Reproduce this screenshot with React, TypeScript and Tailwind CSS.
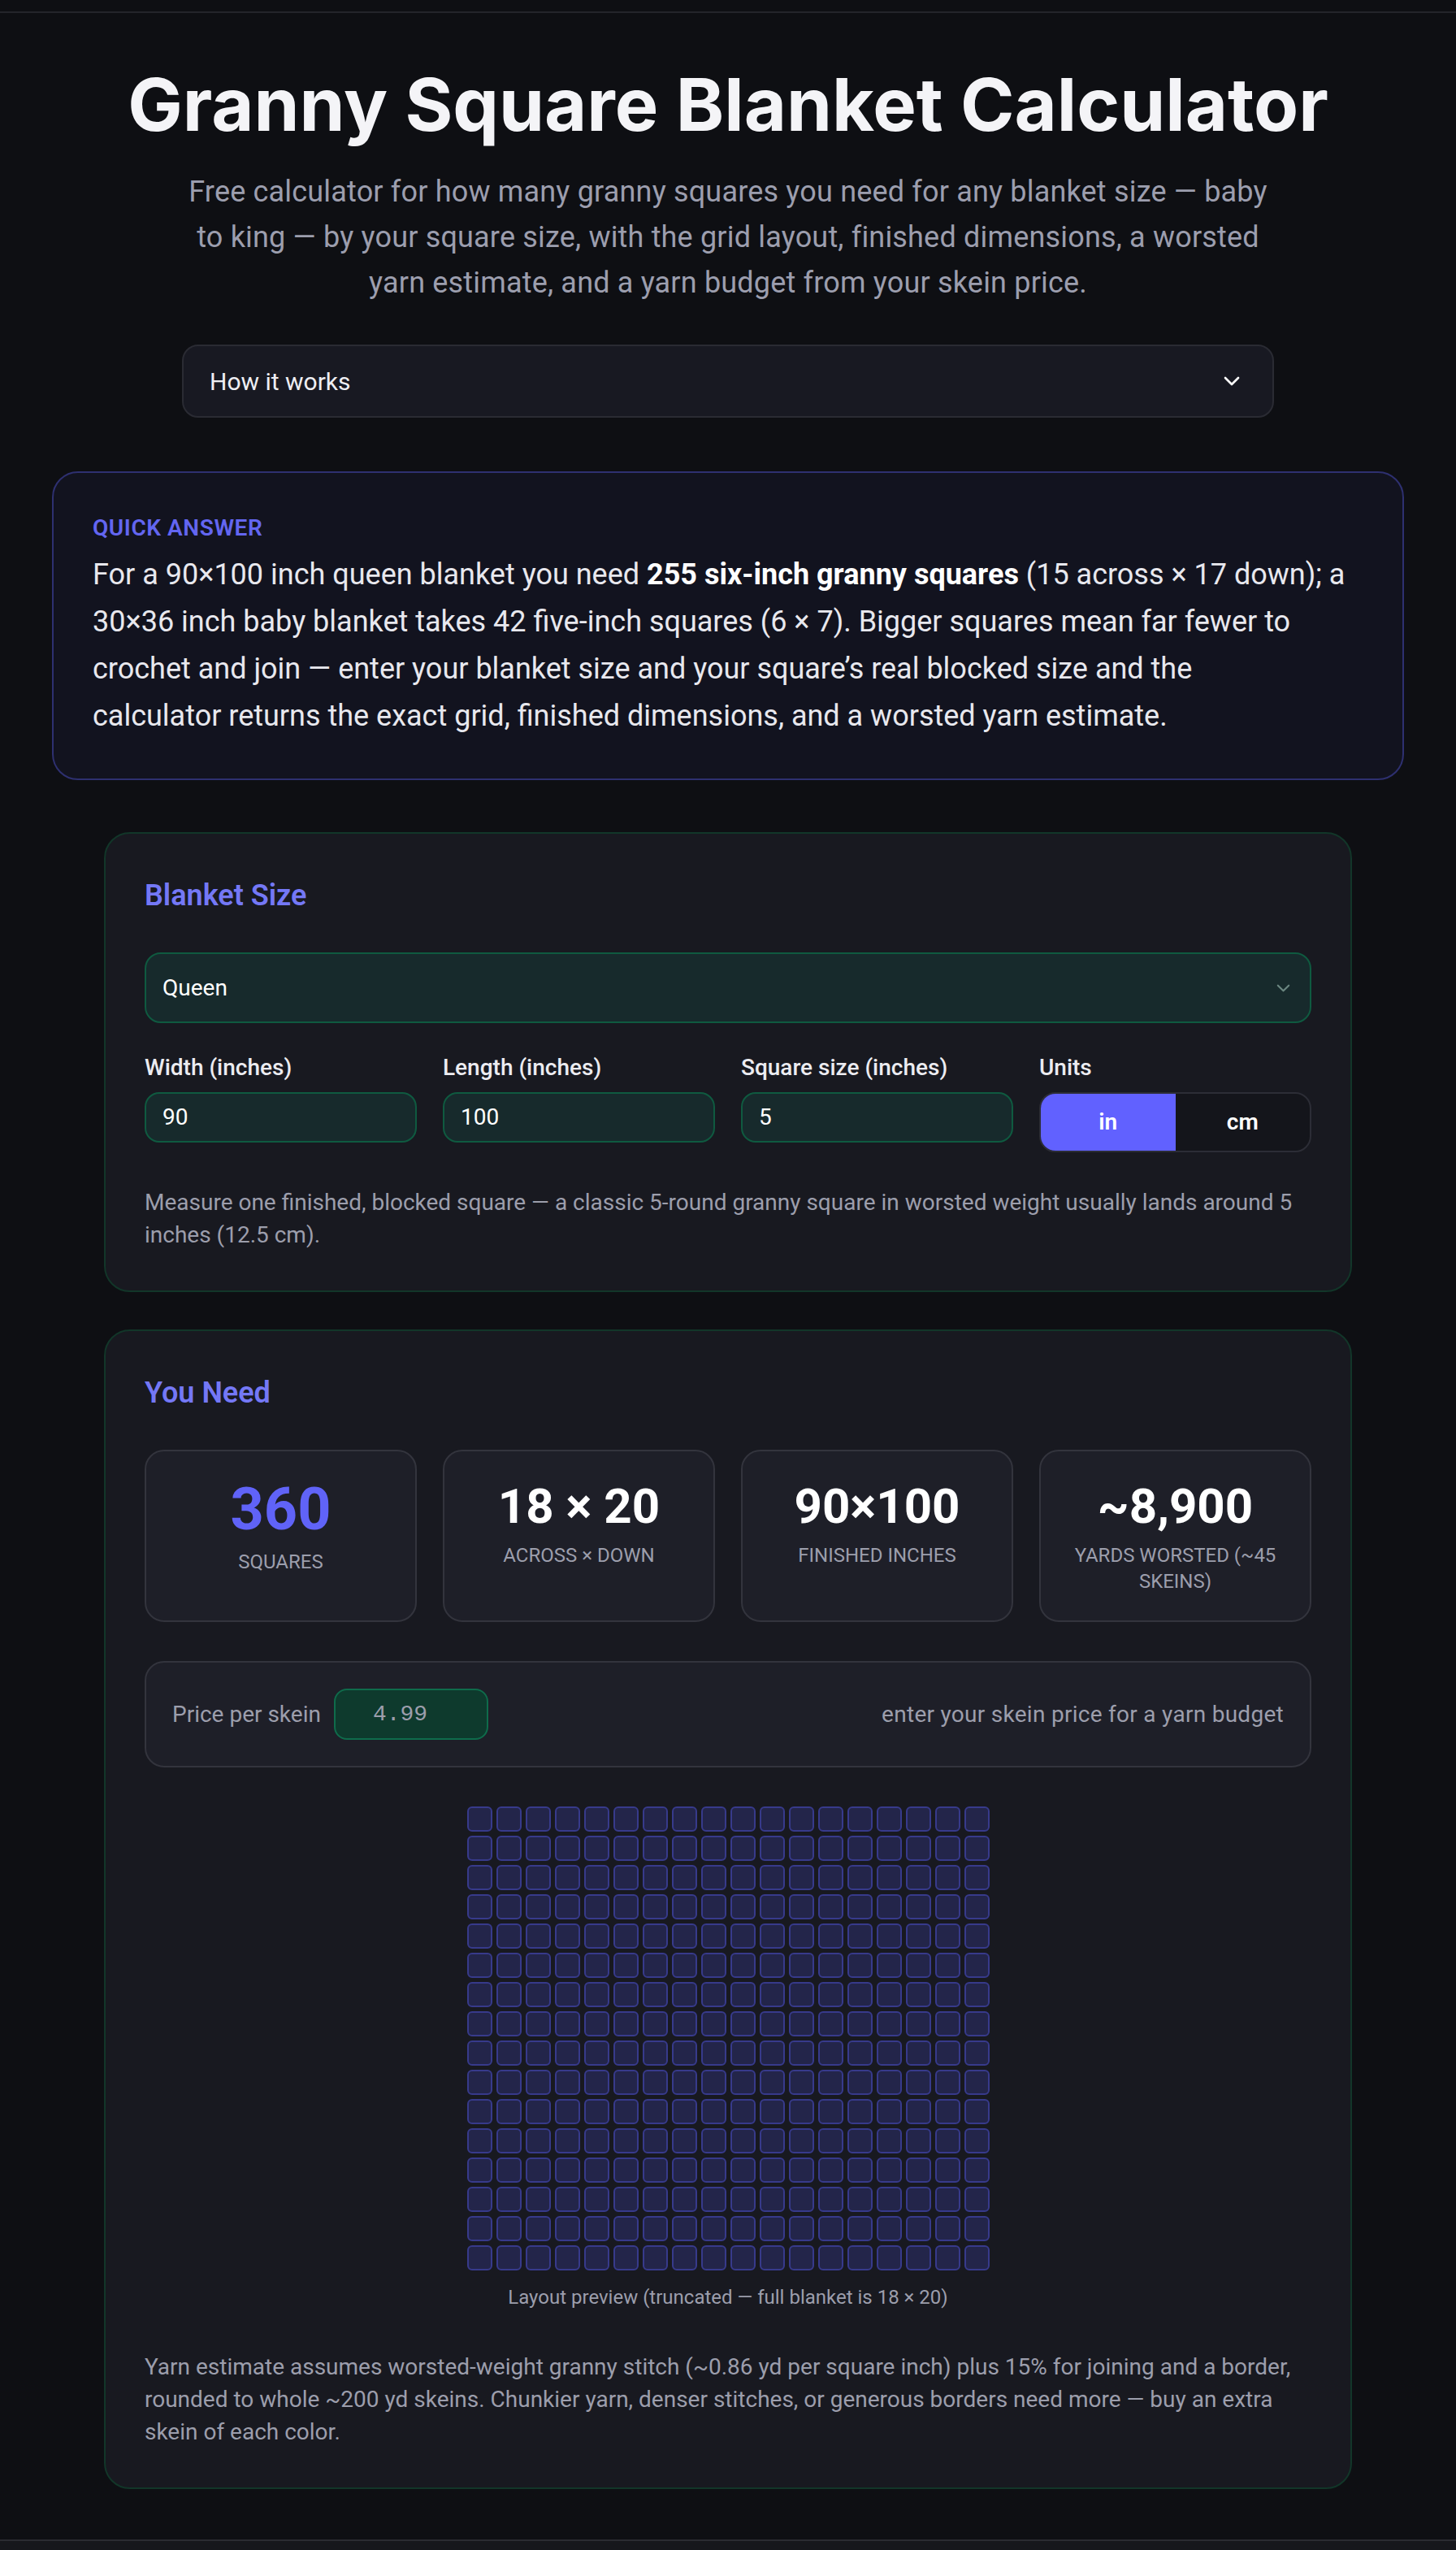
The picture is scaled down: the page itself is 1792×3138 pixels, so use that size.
import React from "react";

const stats = [
  { value: "360", label: "Squares", primary: true },
  { value: "18 × 20", label: "Across × Down", primary: false },
  { value: "90×100", label: "Finished inches", primary: false },
  { value: "~8,900", label: "Yards worsted (~45 skeins)", primary: false },
];

const fields = [
  { label: "Width (inches)", value: "90" },
  { label: "Length (inches)", value: "100" },
  { label: "Square size (inches)", value: "5" },
];

function Chevron({ className }: { className?: string }) {
  return (
    <svg viewBox="0 0 20 12" fill="none" className={className}>
      <path d="M2 2l8 8 8-8" stroke="currentColor" strokeWidth="2.6" strokeLinecap="round" strokeLinejoin="round" />
    </svg>
  );
}

export default function App() {
  const cells = Array.from({ length: 18 * 16 }, (_, i) => i);
  return (
    <div className="min-h-screen bg-[#0e0f13] font-['Roboto',sans-serif] text-white">
      <div className="h-[16px] border-b-2 border-[#24252b]" />
      <main className="px-[64px] pt-[65px]">
        <h1 className="text-center font-['Inter',sans-serif] text-[90px] font-bold leading-[96px] text-[#f4f4f7]">
          Granny Square Blanket Calculator
        </h1>
        <p className="mx-auto mt-[31px] max-w-[1344px] text-center text-[36px] leading-[56px] tracking-[0.005em] text-[#9c9eae]">
          Free calculator for how many granny squares you need for any blanket size — baby to king — by your square size, with the grid layout, finished dimensions, a worsted yarn estimate, and a yarn budget from your skein price.
        </p>
        <div className="mx-auto mt-[48px] flex h-[90px] max-w-[1344px] items-center justify-between rounded-[20px] border-2 border-[#2a2b33] bg-[#181922] pl-[32px] pr-[40px]">
          <span className="text-[30px] text-[#eeeef3]">How it works</span>
          <Chevron className="h-[12px] w-[20px] text-white" />
        </div>

        <section className="mt-[66px] rounded-[32px] border-2 border-[#2e3070] bg-[#12131f] p-[48px]">
          <div className="text-[28px] font-semibold uppercase leading-[40px] tracking-[0.02em] text-[#6366f1]">Quick answer</div>
          <p className="mt-[8px] text-[36px] leading-[58px] text-[#e8e8ee]">
            For a 90×100 inch queen blanket you need <strong className="font-bold text-white">255 six-inch granny squares</strong> (15 across × 17 down); a 30×36 inch baby blanket takes 42 five-inch squares (6 × 7). Bigger squares mean far fewer to crochet and join — enter your blanket size and your square’s real blocked size and the
            <br />
            calculator returns the exact grid, finished dimensions, and a worsted yarn estimate.
          </p>
        </section>

        <section className="mx-auto mt-[64px] max-w-[1536px] rounded-[32px] border-2 border-[#123629] bg-[#181920] p-[48px]">
          <h2 className="text-[36px] font-semibold leading-[56px] text-[#7478f6]">Blanket Size</h2>
          <div className="mt-[42px] flex h-[87px] items-center justify-between rounded-[20px] border-2 border-[#0f5a40] bg-[#172a2c] pl-[20px] pr-[24px]">
            <span className="text-[28px] text-white">Queen</span>
            <Chevron className="h-[10px] w-[17px] text-[#6a8680]" />
          </div>
          <div className="mt-[35px] grid grid-cols-4 items-start gap-x-[32px]">
            {fields.map((f) => (
              <div key={f.label}>
                <div className="text-[28px] font-medium leading-[40px] text-[#ececf1]">{f.label}</div>
                <div className="mt-[10px] flex h-[62px] items-center rounded-[18px] border-2 border-[#0f5a40] bg-[#172a2c] px-[20px] text-[28px] text-white">
                  {f.value}
                </div>
              </div>
            ))}
            <div>
              <div className="text-[28px] font-medium leading-[40px] text-[#ececf1]">Units</div>
              <div className="mt-[10px] flex h-[74px] overflow-hidden rounded-[20px] border-2 border-[#2c2d36] bg-[#14151b]">
                <div className="flex flex-1 items-center justify-center bg-[#6161ff] text-[28px] font-semibold text-white">in</div>
                <div className="flex flex-1 items-center justify-center text-[28px] font-semibold text-white">cm</div>
              </div>
            </div>
          </div>
          <p className="mt-[42px] text-[28px] leading-[40px] text-[#9c9eac]">
            Measure one finished, blocked square — a classic 5-round granny square in worsted weight usually lands around 5 inches (12.5 cm).
          </p>
        </section>

        <section className="mx-auto mt-[46px] max-w-[1536px] rounded-[32px] border-2 border-[#123629] bg-[#181920] p-[48px]">
          <h2 className="text-[36px] font-semibold leading-[56px] text-[#7478f6]">You Need</h2>
          <div className="mt-[42px] grid grid-cols-4 gap-[32px]">
            {stats.map((s) => (
              <div key={s.label} className="rounded-[24px] border-2 border-[#33343d] bg-[#1e1f28] px-[32px] py-[32px] text-center">
                {s.primary ? (
                  <div className="text-[72px] font-bold leading-[80px] text-[#6063f8]">{s.value}</div>
                ) : (
                  <div className="text-[60px] font-bold leading-[72px] text-white">{s.value}</div>
                )}
                <div className="mt-[8px] text-[24px] uppercase leading-[32px] text-[#9c9eac]">{s.label}</div>
              </div>
            ))}
          </div>

          <div className="mt-[48px] flex items-center justify-between rounded-[24px] border-2 border-[#33343d] bg-[#1e1f28] px-[32px] py-[32px]">
            <div className="flex items-center gap-[16px]">
              <span className="text-[28px] text-[#9c9eac]">Price per skein</span>
              <div className="flex h-[63px] w-[190px] items-center rounded-[16px] border-2 border-[#0f6b4b] bg-[#0e3a2d] pl-[46px] font-['Liberation_Mono',monospace] text-[28px] text-[#9c9eac]">
                4.99
              </div>
            </div>
            <span className="text-[28px] tracking-[0.01em] text-[#9c9eac]">enter your skein price for a yarn budget</span>
          </div>

          <div className="mt-[48px] flex justify-center">
            <div className="grid grid-cols-[repeat(18,31px)] gap-[5px]">
              {cells.map((i) => (
                <div key={i} className="h-[31px] w-[31px] rounded-[6px] border-2 border-[#373a8b] bg-[#23254a]" />
              ))}
            </div>
          </div>
          <div className="mt-[17px] text-center text-[24px] leading-[32px] text-[#9c9eac]">
            Layout preview (truncated — full blanket is 18 × 20)
          </div>
          <p className="mt-[50px] text-[28px] leading-[40px] text-[#9c9eac]">
            Yarn estimate assumes worsted-weight granny stitch (~0.86 yd per square inch) plus 15% for joining and a border, rounded to whole ~200 yd skeins. Chunkier yarn, denser stitches, or generous borders need more — buy an extra skein of each color.
          </p>
        </section>
      </main>
      <footer className="mt-[62px] h-[200px] border-t-2 border-[#2a2b31] bg-[#16171c]" />
    </div>
  );
}
